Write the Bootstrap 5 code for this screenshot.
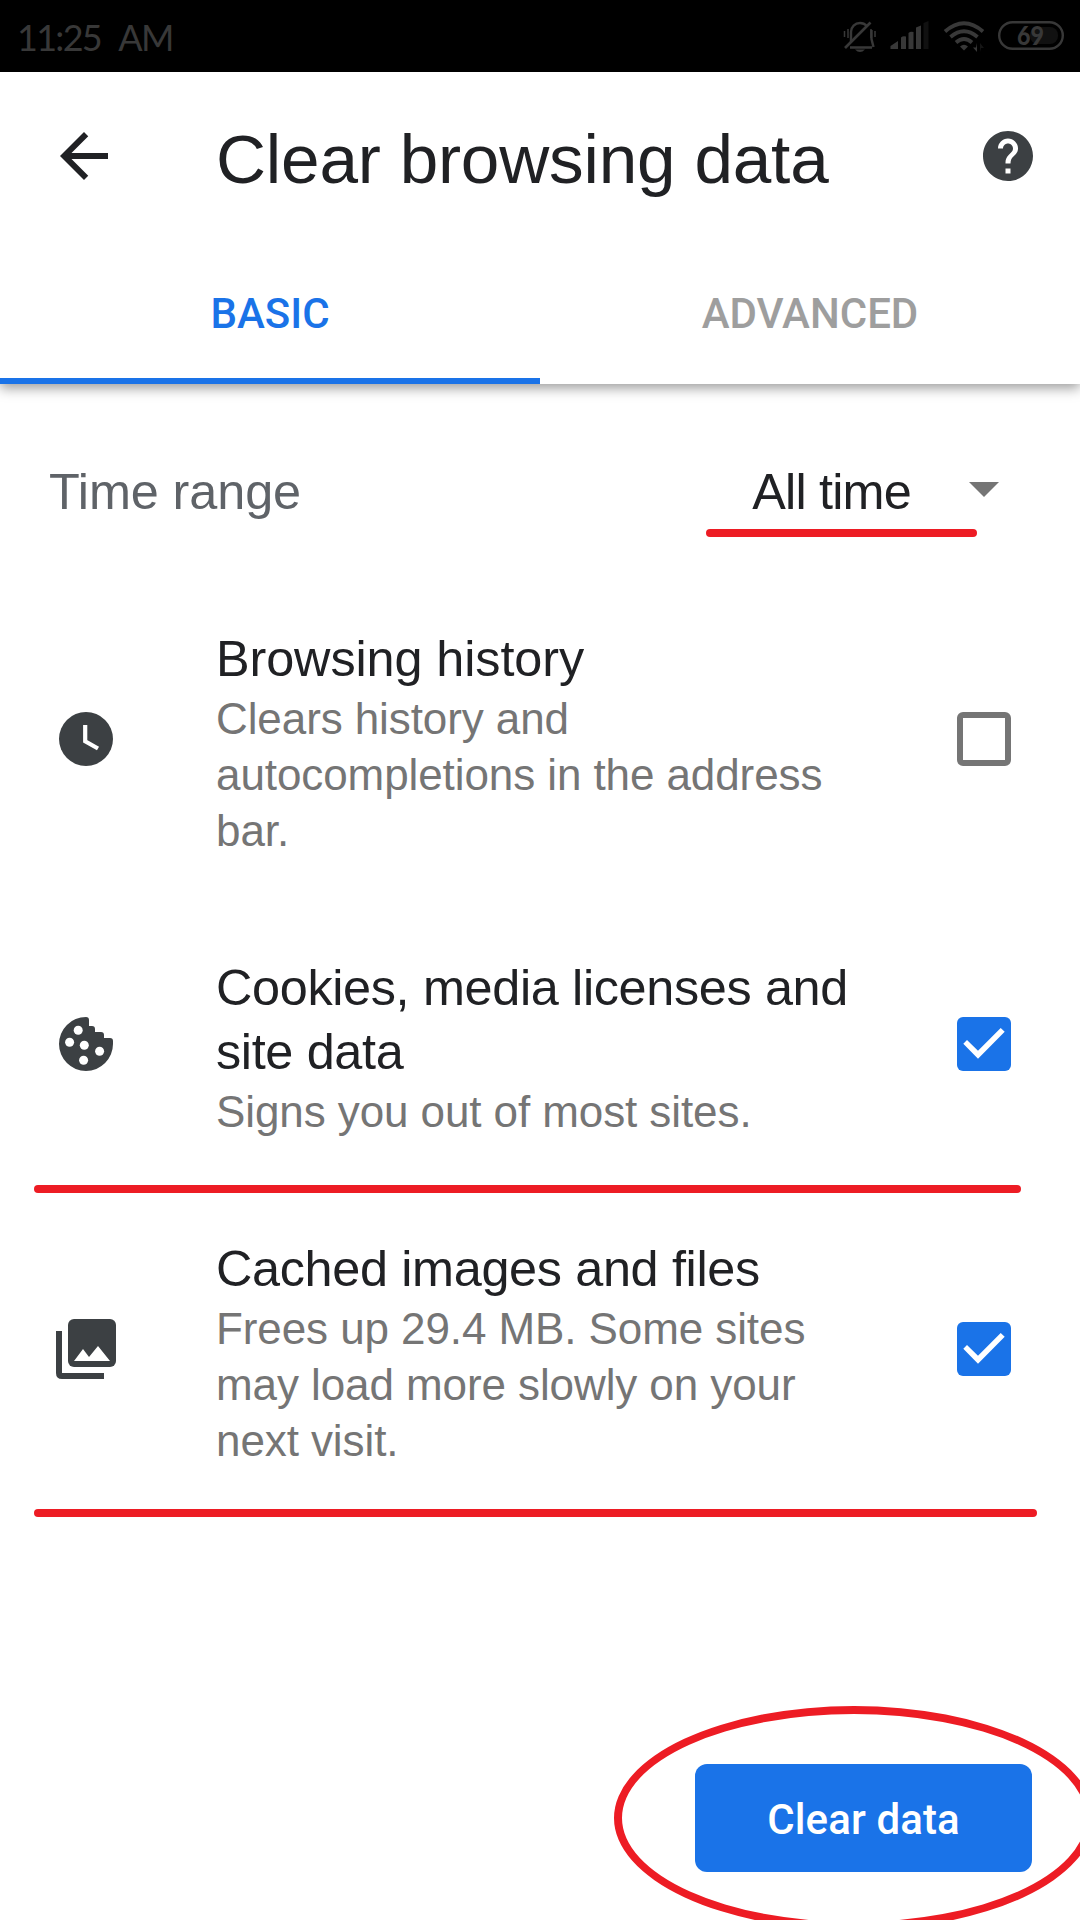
<!DOCTYPE html>
<html lang="en">
<head>
<meta charset="utf-8">
<meta name="viewport" content="width=device-width, initial-scale=1">
<title>Clear browsing data</title>
<link href="https://cdn.jsdelivr.net/npm/bootstrap@5.3.0/dist/css/bootstrap.min.css" rel="stylesheet">
<style>
  body { font-family: "Liberation Sans", Arial, sans-serif; background: #fff; }
  .screen { width: 1080px; height: 1920px; }
  .screen svg { display: block; flex: none; }
  .status-bar { height: 72px; background: #000; color: #383838; padding: 0 16px 0 17px; }
  .clock-text { font: 36px/72px Lato, sans-serif; letter-spacing: -1.7px; word-spacing: 11px; padding-top: 1px; }
  .app-bar { height: 168px; padding: 0 42px 0 48px; }
  .app-title { font-size: 69.3px; line-height: 80px; margin: 6px 0 0 96px; color: #202124; white-space: nowrap; letter-spacing: -.2px; font-weight: 400; }
  .tab-strip { height: 144px; box-shadow: 0 4px 12px rgba(0,0,0,.4); clip-path: inset(0 0 -30px 0); }
  .tab-strip .nav-link { font: 500 42px/48px Roboto, sans-serif; color: #9e9e9e; border-radius: 0; padding: 50px 0 40px; border-bottom: 6px solid transparent; }
  .tab-strip .nav-link.active { color: #1a73e8; border-bottom-color: #1a73e8; }
  .range-row { height: 203px; padding: 12px 81px 0 49px; font-size: 50.4px; line-height: 60px; }
  .range-label { color: #5f6368; letter-spacing: -.1px; }
  .range-value { color: #202124; letter-spacing: -.8px; font-size: 50.4px; line-height: 60px; padding-right: 10px; }
  .range-arrow { margin-top: 2px; }
  .option { height: 304px; padding: 0 69px 0 50px; }
  .option.tall { height: 306px; }
  .option-text { width: 660px; margin-left: 94px; padding-top: 7px; }
  .option-title { font-size: 50.4px; line-height: 64px; color: #202124; font-weight: 400; margin: 0; letter-spacing: -.1px; }
  .option-title.snug { letter-spacing: -.35px; }
  .option-desc { font-size: 44px; line-height: 56px; color: #757575; margin: 0; letter-spacing: -.09px; }
  .tick-box { width: 54px; height: 54px; border: 6px solid #757575; border-radius: 6px; flex: none; }
  .tick-box.on { border: 0; background: #1a73e8; }
  .actions { padding: 0 48px 48px 0; }
  .btn-clear { width: 337px; height: 108px; border-radius: 12px; background: #1a73e8; color: #fff; font: 500 42px/48px Roboto, sans-serif; padding: 4px 0 0; border: 0; letter-spacing: .1px; }
  .stroke-line { position: absolute; height: 8px; border-radius: 4px; background: #ed1c24; }
  .stroke-range { left: 706px; top: 529px; width: 271px; }
  .stroke-cookies { left: 34px; top: 1185px; width: 987px; }
  .stroke-cache { left: 34px; top: 1509px; width: 1003px; }
  .stroke-ring { position: absolute; left: 614px; top: 1706px; width: 480px; height: 224px; border: 8px solid #ed1c24; border-radius: 50%; pointer-events: none; }
</style>
</head>
<body>
<div class="screen position-relative overflow-hidden d-flex flex-column">
  <header class="status-bar d-flex align-items-center justify-content-between">
    <span class="clock-text">11:25 AM</span>
    <svg width="224" height="72" viewBox="840 0 224 72" fill="none" stroke="#383838">
      <!-- muted bell -->
      <path d="M850 47.500h22M851 42V32c0-5 4-9 9-9 3 0 5 1 7 3M871.500 30v9l2 8" stroke-width="2.400"/>
      <path d="M845 48L870.500 22.500" stroke-width="2.600"/>
      <path d="M844.500 31v6M848 29v9M871 29v9M875 31v6" stroke-width="1.500"/>
      <path d="M855 49.500h10q-5 5-10 0z" fill="#383838" stroke="none"/>
      <!-- signal -->
      <path d="M890.500 49v-3l7.500-5v8zM901 49V37.500q2-2 5-1V49zM908.500 49V33q2-2 5-1V49zM916 49V27.500l5-2V49z" fill="#383838" stroke="none"/>
      <path d="M923.500 49V23l5-2v28z" fill="#111" stroke="none"/>
      <!-- wifi -->
      <path d="M945 31.500Q964 15 983 31.500M950.500 37Q964 25.500 977.500 37M956 42.500Q964 35.500 972 42.500" stroke-width="3.800"/>
      <path d="M960 46.500q4-3.500 8 0l-4 4z" fill="#383838" stroke="none"/>
      <path d="M977 43v9l-4-4.500h3z" fill="#383838" stroke="none"/>
      <path d="M980 52v-9l4 5h-3z" fill="#151515" stroke="none"/>
      <!-- battery -->
      <rect x="1030" y="27" width="28" height="17" rx="8" fill="#111" stroke="none"/>
      <rect x="999.200" y="22.200" width="63.600" height="26.600" rx="13.300" stroke-width="2.400"/>
      <text x="1030.500" y="44.800" text-anchor="middle" fill="#383838" stroke="none" font-family="Lato, sans-serif" font-weight="900" font-size="26.500" textLength="27" lengthAdjust="spacingAndGlyphs">69</text>
    </svg>
  </header>

  <div class="app-bar d-flex align-items-center">
    <svg width="72" height="72" viewBox="0 0 24 24" fill="#202124"><path d="M20 11H7.830l5.590-5.590L12 4l-8 8 8 8 1.410-1.410L7.830 13H20v-2z"/></svg>
    <h1 class="app-title mb-0">Clear browsing data</h1>
    <svg class="ms-auto" width="55" height="60" viewBox="2 0 22 24" fill="#3c4043"><path d="M12 2C6.480 2 2 6.480 2 12s4.480 10 10 10 10-4.480 10-10S17.520 2 12 2zm1 17h-2v-2h2v2zm2.070-7.750l-.9.920C13.450 12.900 13 13.500 13 15h-2v-.5c0-1.100.450-2.100 1.170-2.830l1.240-1.260c.370-.360.590-.860.590-1.410 0-1.100-.9-2-2-2s-2 .9-2 2H8c0-2.210 1.790-4 4-4s4 1.790 4 4c0 .880-.360 1.680-.930 2.250z"/></svg>
  </div>

  <nav class="tab-strip nav nav-fill flex-nowrap">
    <a class="nav-link w-50 active" href="#">BASIC</a>
    <a class="nav-link w-50" href="#">ADVANCED</a>
  </nav>

  <div class="range-row d-flex align-items-center justify-content-between">
    <span class="range-label">Time range</span>
    <div class="d-flex align-items-center gap-5">
      <span class="range-value">All time</span>
      <svg class="range-arrow" width="30" height="22" viewBox="0 0 30 22" fill="#757575"><path d="M0 0h30L15 15z"/></svg>
    </div>
  </div>

  <section class="option d-flex align-items-center">
    <svg width="72" height="72" viewBox="50 703 72 72"><circle cx="86" cy="739" r="27" fill="#3c4043"/><path d="M85.200 725v16.300l12.800 7.200" fill="none" stroke="#fff" stroke-width="4.200"/></svg>
    <div class="option-text">
      <h2 class="option-title">Browsing history</h2>
      <p class="option-desc">Clears history and<br>autocompletions in the address<br>bar.</p>
    </div>
    <span class="tick-box ms-auto"></span>
  </section>

  <section class="option tall d-flex align-items-center">
    <svg width="72" height="72" viewBox="50 1008 72 72">
      <path d="M86 1017a27 27 0 1 0 27 27v-3q0-3-3-3h-6v-3q0-3-3-3h-6v-3q0-3-3-3h-3v-6q0-3-3-3z" fill="#3c4043"/>
      <g fill="#fff"><circle cx="78.200" cy="1030.300" r="4.500"/><circle cx="69.600" cy="1042.300" r="4.500"/><circle cx="84.300" cy="1045.300" r="4.500"/><circle cx="99.600" cy="1051.300" r="4.500"/><circle cx="83.600" cy="1060.300" r="4.500"/></g>
    </svg>
    <div class="option-text">
      <h2 class="option-title snug">Cookies, media licenses and<br>site data</h2>
      <p class="option-desc">Signs you out of most sites.</p>
    </div>
    <span class="tick-box on ms-auto"><svg width="54" height="54" viewBox="0 0 54 54"><path d="M6.300 26.700L10 23l11 10.700L43.700 11l4 3.700-26.700 27z" fill="#fff"/></svg></span>
  </section>

  <section class="option d-flex align-items-center">
    <svg width="72" height="72" viewBox="50 1313 72 72"><rect x="68" y="1319" width="48" height="48" rx="6" fill="#3c4043"/><path d="M56 1331h6v42h42v6H62q-6 0-6-6z" fill="#3c4043"/><path d="M74 1361l9-12 6 8 9-11 12 15z" fill="#fff"/></svg>
    <div class="option-text">
      <h2 class="option-title snug">Cached images and files</h2>
      <p class="option-desc">Frees up 29.4 MB. Some sites<br>may load more slowly on your<br>next visit.</p>
    </div>
    <span class="tick-box on ms-auto"><svg width="54" height="54" viewBox="0 0 54 54"><path d="M6.300 26.700L10 23l11 10.700L43.700 11l4 3.700-26.700 27z" fill="#fff"/></svg></span>
  </section>

  <footer class="actions mt-auto d-flex justify-content-end">
    <button class="btn btn-clear" type="button">Clear data</button>
  </footer>

  <!-- hand-drawn highlights -->
  <div class="stroke-line stroke-range"></div>
  <div class="stroke-line stroke-cookies"></div>
  <div class="stroke-line stroke-cache"></div>
  <div class="stroke-ring"></div>
</div>
<script src="https://cdn.jsdelivr.net/npm/bootstrap@5.3.0/dist/js/bootstrap.bundle.min.js"></script>
</body>
</html>
